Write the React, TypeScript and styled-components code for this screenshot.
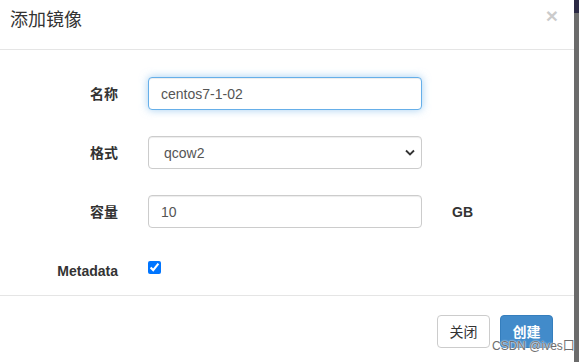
import React from "react";
import styled, { createGlobalStyle } from "styled-components";

const Global = createGlobalStyle`
  html, body { margin: 0; padding: 0; background: #fff; }
  body { font-family: "Liberation Sans", Arial, "Noto Sans CJK SC", sans-serif; font-size: 14px; color: #333; }
  * { box-sizing: border-box; }
`;

const Page = styled.div`
  display: flex;
  width: 579px;
  height: 362px;
  overflow: hidden;
`;

const Dialog = styled.div`
  position: relative;
  width: 574px;
  height: 362px;
  background: #fff;
  display: flex;
  flex-direction: column;
`;

const Strip = styled.div`
  width: 5px;
  height: 362px;
  background: linear-gradient(to bottom, #2c2a45 0, #2c2a45 13px, #6b6b6b 13px, #6b6b6b 100%);
`;

const Header = styled.div`
  height: 50px;
  border-bottom: 1px solid #e5e5e5;
  padding: 8px 16px 0 10px;
  display: flex;
  align-items: flex-start;
  justify-content: space-between;
`;

const Title = styled.h4`
  margin: 0;
  font-size: 18px;
  line-height: 25px;
  font-weight: normal;
  color: #333;
`;

const Close = styled.button`
  border: 0;
  background: none;
  padding: 0;
  margin-top: -3px;
  font-family: "Liberation Sans", Arial, sans-serif;
  font-size: 21px;
  font-weight: bold;
  line-height: 1;
  color: #000;
  opacity: 0.2;
  cursor: pointer;
`;

const Body = styled.div`
  padding: 27px 0 0 0;
  height: 246px;
  border-bottom: 1px solid #e5e5e5;
  display: flex;
  flex-direction: column;
  gap: 25px;
`;

const Row = styled.div`
  display: flex;
  align-items: flex-start;
  min-height: 34px;
`;

const Label = styled.label`
  width: 118px;
  text-align: right;
  padding-top: 7px;
  font-weight: bold;
  line-height: 20px;
  color: #333;
`;

const Control = styled.div`
  position: relative;
  margin-left: 30px;
  width: 274px;
`;

const Input = styled.input<{ $focus?: boolean }>`
  width: 100%;
  height: 33px;
  padding: 6px 12px;
  font-family: inherit;
  font-size: 14px;
  color: #555;
  background: #fff;
  border: 1px solid ${(p) => (p.$focus ? "#66afe9" : "#ccc")};
  border-radius: 4px;
  outline: none;
  box-shadow: ${(p) =>
    p.$focus
      ? "inset 0 1px 1px rgba(0,0,0,.075), 0 0 8px rgba(102,175,233,.6)"
      : "inset 0 1px 1px rgba(0,0,0,.075)"};
`;

const Select = styled.select`
  width: 100%;
  height: 33px;
  padding: 6px 12px 6px 15px;
  font-family: inherit;
  font-size: 14px;
  color: #555;
  background: #fff;
  border: 1px solid #ccc;
  border-radius: 4px;
  appearance: none;
  outline: none;
  box-shadow: inset 0 1px 1px rgba(0,0,0,.075);
`;

const Chevron = styled.svg`
  position: absolute;
  right: 7px;
  top: 13px;
  pointer-events: none;
`;

const Unit = styled.span`
  margin-left: 30px;
  padding-top: 7px;
  line-height: 20px;
  font-weight: bold;
  color: #333;
`;

const Check = styled.input`
  margin: 7px 0 0 30px;
  width: 13px;
  height: 13px;
`;

const Footer = styled.div`
  flex: 1;
  display: flex;
  justify-content: flex-end;
  align-items: flex-start;
  gap: 10px;
  padding: 19px 21px 0 0;
`;

const Button = styled.button<{ $primary?: boolean }>`
  width: 53px;
  height: 33px;
  padding: 0 0 2px;
  font-family: inherit;
  font-size: 14px;
  border-radius: 4px;
  border: 1px solid ${(p) => (p.$primary ? "#357ebd" : "#ccc")};
  background: ${(p) => (p.$primary ? "#428bca" : "#fff")};
  color: ${(p) => (p.$primary ? "#fff" : "#333")};
  font-weight: ${(p) => (p.$primary ? 600 : "normal")};
  cursor: pointer;
`;

const Watermark = styled.div`
  position: absolute;
  left: 492px;
  top: 340px;
  font-size: 12px;
  line-height: 13px;
  color: #6e6e6e;
  text-shadow: 0 0 2px #fff, 0 0 1px #fff;
  white-space: nowrap;
`;

export default function App() {
  return (
    <Page>
      <Global />
      <Dialog>
        <Header>
          <Title>添加镜像</Title>
          <Close aria-label="close">×</Close>
        </Header>
        <Body>
          <Row>
            <Label>名称</Label>
            <Control>
              <Input $focus defaultValue="centos7-1-02" />
            </Control>
          </Row>
          <Row>
            <Label>格式</Label>
            <Control>
              <Select defaultValue="qcow2">
                <option value="qcow2">qcow2</option>
                <option value="raw">raw</option>
              </Select>
              <Chevron width="10" height="7" viewBox="0 0 10 7">
                <path d="M1 1.5 L5 5.5 L9 1.5" fill="none" stroke="#333" strokeWidth="1.8" />
              </Chevron>
            </Control>
          </Row>
          <Row>
            <Label>容量</Label>
            <Control>
              <Input defaultValue="10" />
            </Control>
            <Unit>GB</Unit>
          </Row>
          <Row>
            <Label>Metadata</Label>
            <Check type="checkbox" defaultChecked />
          </Row>
        </Body>
        <Footer>
          <Button>关闭</Button>
          <Button $primary>创建</Button>
        </Footer>
        <Watermark>CSDN @ives口</Watermark>
      </Dialog>
      <Strip />
    </Page>
  );
}
